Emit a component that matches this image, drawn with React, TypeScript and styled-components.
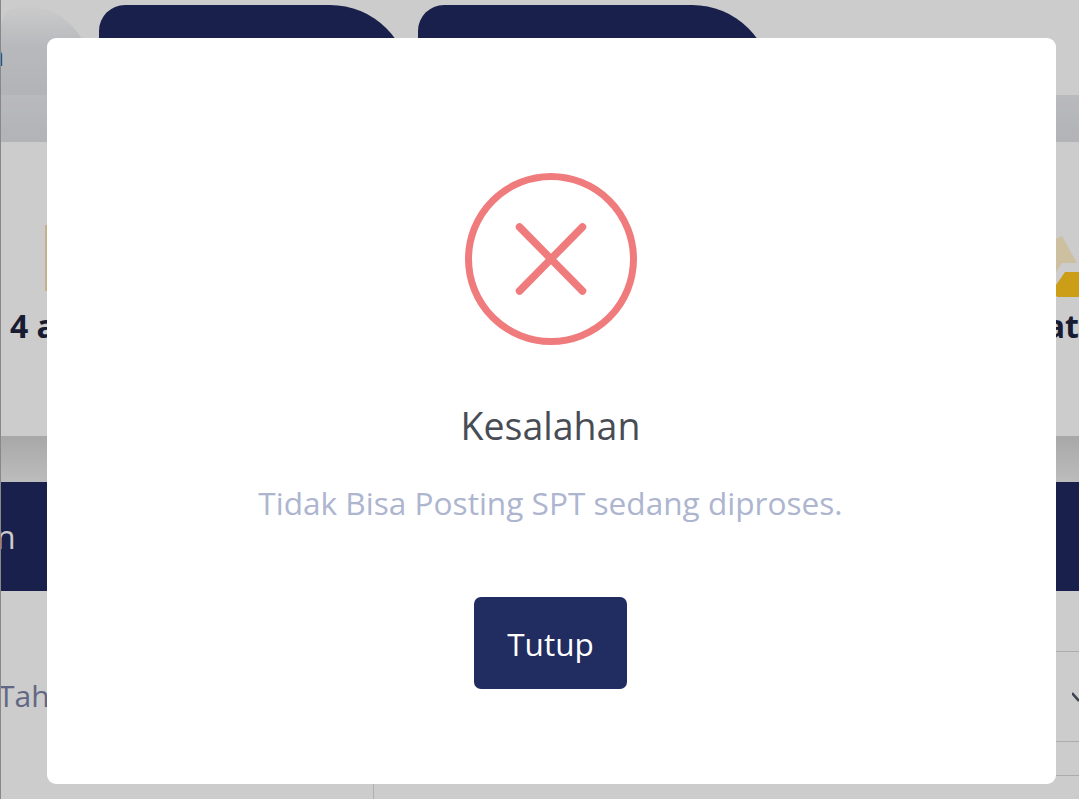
import styled, { createGlobalStyle } from 'styled-components';

const GlobalStyle = createGlobalStyle`
  html, body {
    margin: 0;
    padding: 0;
    height: 100%;
    overflow: hidden;
    background: #fff;
    font-family: "Open Sans", "Noto Sans", sans-serif;
  }
  * { box-sizing: border-box; }
`;

const Page = styled.div`
  width: 1079px;
  height: 799px;
  overflow: hidden;
  display: flex;
  flex-direction: column;
  background: #fff;
  border-left: 1px solid #aaa;
`;

const TabBar = styled.div`
  height: 95px;
  padding-top: 5px;
  display: flex;
  gap: 8px;
  background: #fff;
`;

const Tab = styled.div<{ $w: number; $light?: boolean }>`
  width: ${(p) => p.$w}px;
  height: 90px;
  flex-shrink: 0;
  border-radius: 26px 80px 0 0;
  background: ${(p) =>
    p.$light ? 'linear-gradient(180deg, #fff 0%, #e6e8ec 45%, #dfe1e5 100%)' : '#20295f'};
  color: #2b5c8f;
  font-size: 30px;
  line-height: 100px;
  text-indent: -15px;
  overflow: hidden;
`;

const Shade = styled.div`
  height: 47px;
  background: linear-gradient(180deg, #e8e9ec 0%, #dfe0e4 100%);
`;

const Summary = styled.div`
  height: 294px;
  display: flex;
  justify-content: space-between;
  padding-top: 83px;
  background: #fff;
`;

const SummaryItem = styled.div<{ $right?: boolean }>`
  display: flex;
  flex-direction: column;
  align-items: ${(p) => (p.$right ? 'flex-end' : 'flex-start')};
  padding-left: ${(p) => (p.$right ? 0 : 9)}px;
`;

const FolderIcon = styled.div<{ $right?: boolean }>`
  height: 72px;
  margin-left: ${(p) => (p.$right ? 0 : 35)}px;
  svg { display: block; }
`;

const SummaryLabel = styled.div`
  margin-top: 7px;
  font-size: 32px;
  line-height: 44px;
  font-weight: 700;
  color: #1d2440;
  white-space: nowrap;
`;

const DarkShade = styled.div`
  height: 46px;
  background: linear-gradient(180deg, #d2d2d2 0%, #ececec 100%);
`;

const SectionHeader = styled.div`
  height: 109px;
  background: #20295f;
  color: #fff;
  font-size: 32px;
  line-height: 109px;
  text-indent: -5px;
  overflow: hidden;
`;

const Spacer = styled.div`
  height: 60px;
  background: #fff;
`;

const FilterRow = styled.div`
  height: 91px;
  display: flex;
  align-items: center;
  justify-content: space-between;
  background: #fff;
`;

const FilterLabel = styled.span`
  font-size: 30px;
  color: #7b82a6;
  margin: -2px 0 0 -3px;
`;

const FilterSelect = styled.div`
  width: 706px;
  height: 91px;
  display: flex;
  align-items: center;
  justify-content: flex-end;
  border-top: 1px solid #d8d8d8;
  border-bottom: 1px solid #d8d8d8;
  color: #4d5566;
  svg { display: block; }
`;

const TableBottom = styled.div`
  flex: 1;
  display: flex;
  flex-direction: column;
  align-items: flex-end;
  background: #fff;
`;

const TableLine = styled.div`
  width: 706px;
  flex: 1;
  border-left: 1px solid #dcdce2;
  margin-top: 33px;
  border-top: 1px solid #d8d8d8;
`;

const Overlay = styled.div`
  position: fixed;
  inset: 0;
  background: rgba(0, 0, 0, 0.2);
  display: flex;
  justify-content: flex-start;
  align-items: flex-start;
  padding: 38px 0 0 47px;
`;

const Modal = styled.div`
  width: 1009px;
  height: 746px;
  padding: 135px 2px 0 0;
  background: #fff;
  border-radius: 9px;
  display: flex;
  flex-direction: column;
  align-items: center;
`;

const ErrorIcon = styled.svg`
  display: block;
  width: 172px;
  height: 172px;
`;

const Title = styled.h2`
  margin: 56px 0 0;
  font-size: 37.5px;
  line-height: 50px;
  font-weight: 400;
  color: #474c55;
`;

const Message = styled.p`
  margin: 29px 0 0;
  font-size: 31.6px;
  line-height: 46px;
  color: #adb5cf;
`;

const CloseButton = styled.button`
  margin-top: 71px;
  width: 153px;
  height: 92px;
  border: none;
  border-radius: 7px;
  background: #212c60;
  color: #fff;
  font-family: inherit;
  font-size: 31.5px;
`;

export default function App() {
  return (
    <>
      <GlobalStyle />
      <Page>
        <TabBar>
          <Tab $w={90} $light>
            n
          </Tab>
          <Tab $w={311} />
          <Tab $w={354} />
        </TabBar>
        <Shade />
        <Summary>
          <SummaryItem>
            <FolderIcon>
              <svg width="40" height="66" viewBox="0 0 40 66">
                <rect x="0" y="0" width="40" height="66" fill="#f8dcaa" />
              </svg>
            </FolderIcon>
            <SummaryLabel>4 a</SummaryLabel>
          </SummaryItem>
          <SummaryItem $right>
            <FolderIcon $right>
              <svg width="23" height="72" viewBox="0 0 23 72">
                <path d="M0 14 L6 11 L21 38 H6 L0 47 Z" fill="#fff0c8" />
                <path d="M9 47 H23 V72 H2 Q0 72 0 70 V60 Z" fill="#ffc61e" />
              </svg>
            </FolderIcon>
            <SummaryLabel>at</SummaryLabel>
          </SummaryItem>
        </Summary>
        <DarkShade />
        <SectionHeader>n</SectionHeader>
        <Spacer />
        <FilterRow>
          <FilterLabel>Tah</FilterLabel>
          <FilterSelect>
            <svg width="7" height="12" viewBox="0 0 7 12">
              <path d="M0 2 L7 10" fill="none" stroke="currentColor" strokeWidth="2.5" />
            </svg>
          </FilterSelect>
        </FilterRow>
        <TableBottom>
          <TableLine />
        </TableBottom>
      </Page>
      <Overlay>
        <Modal>
          <ErrorIcon viewBox="0 0 172 172">
            <circle cx="86" cy="86" r="82.5" fill="none" stroke="#f07b7d" strokeWidth="7" />
            <path
              d="M54.5 54 L117.5 118 M117.5 54 L54.5 118"
              fill="none"
              stroke="#f07b7d"
              strokeWidth="7.5"
              strokeLinecap="round"
            />
          </ErrorIcon>
          <Title>Kesalahan</Title>
          <Message>Tidak Bisa Posting SPT sedang diproses.</Message>
          <CloseButton>Tutup</CloseButton>
        </Modal>
      </Overlay>
    </>
  );
}
